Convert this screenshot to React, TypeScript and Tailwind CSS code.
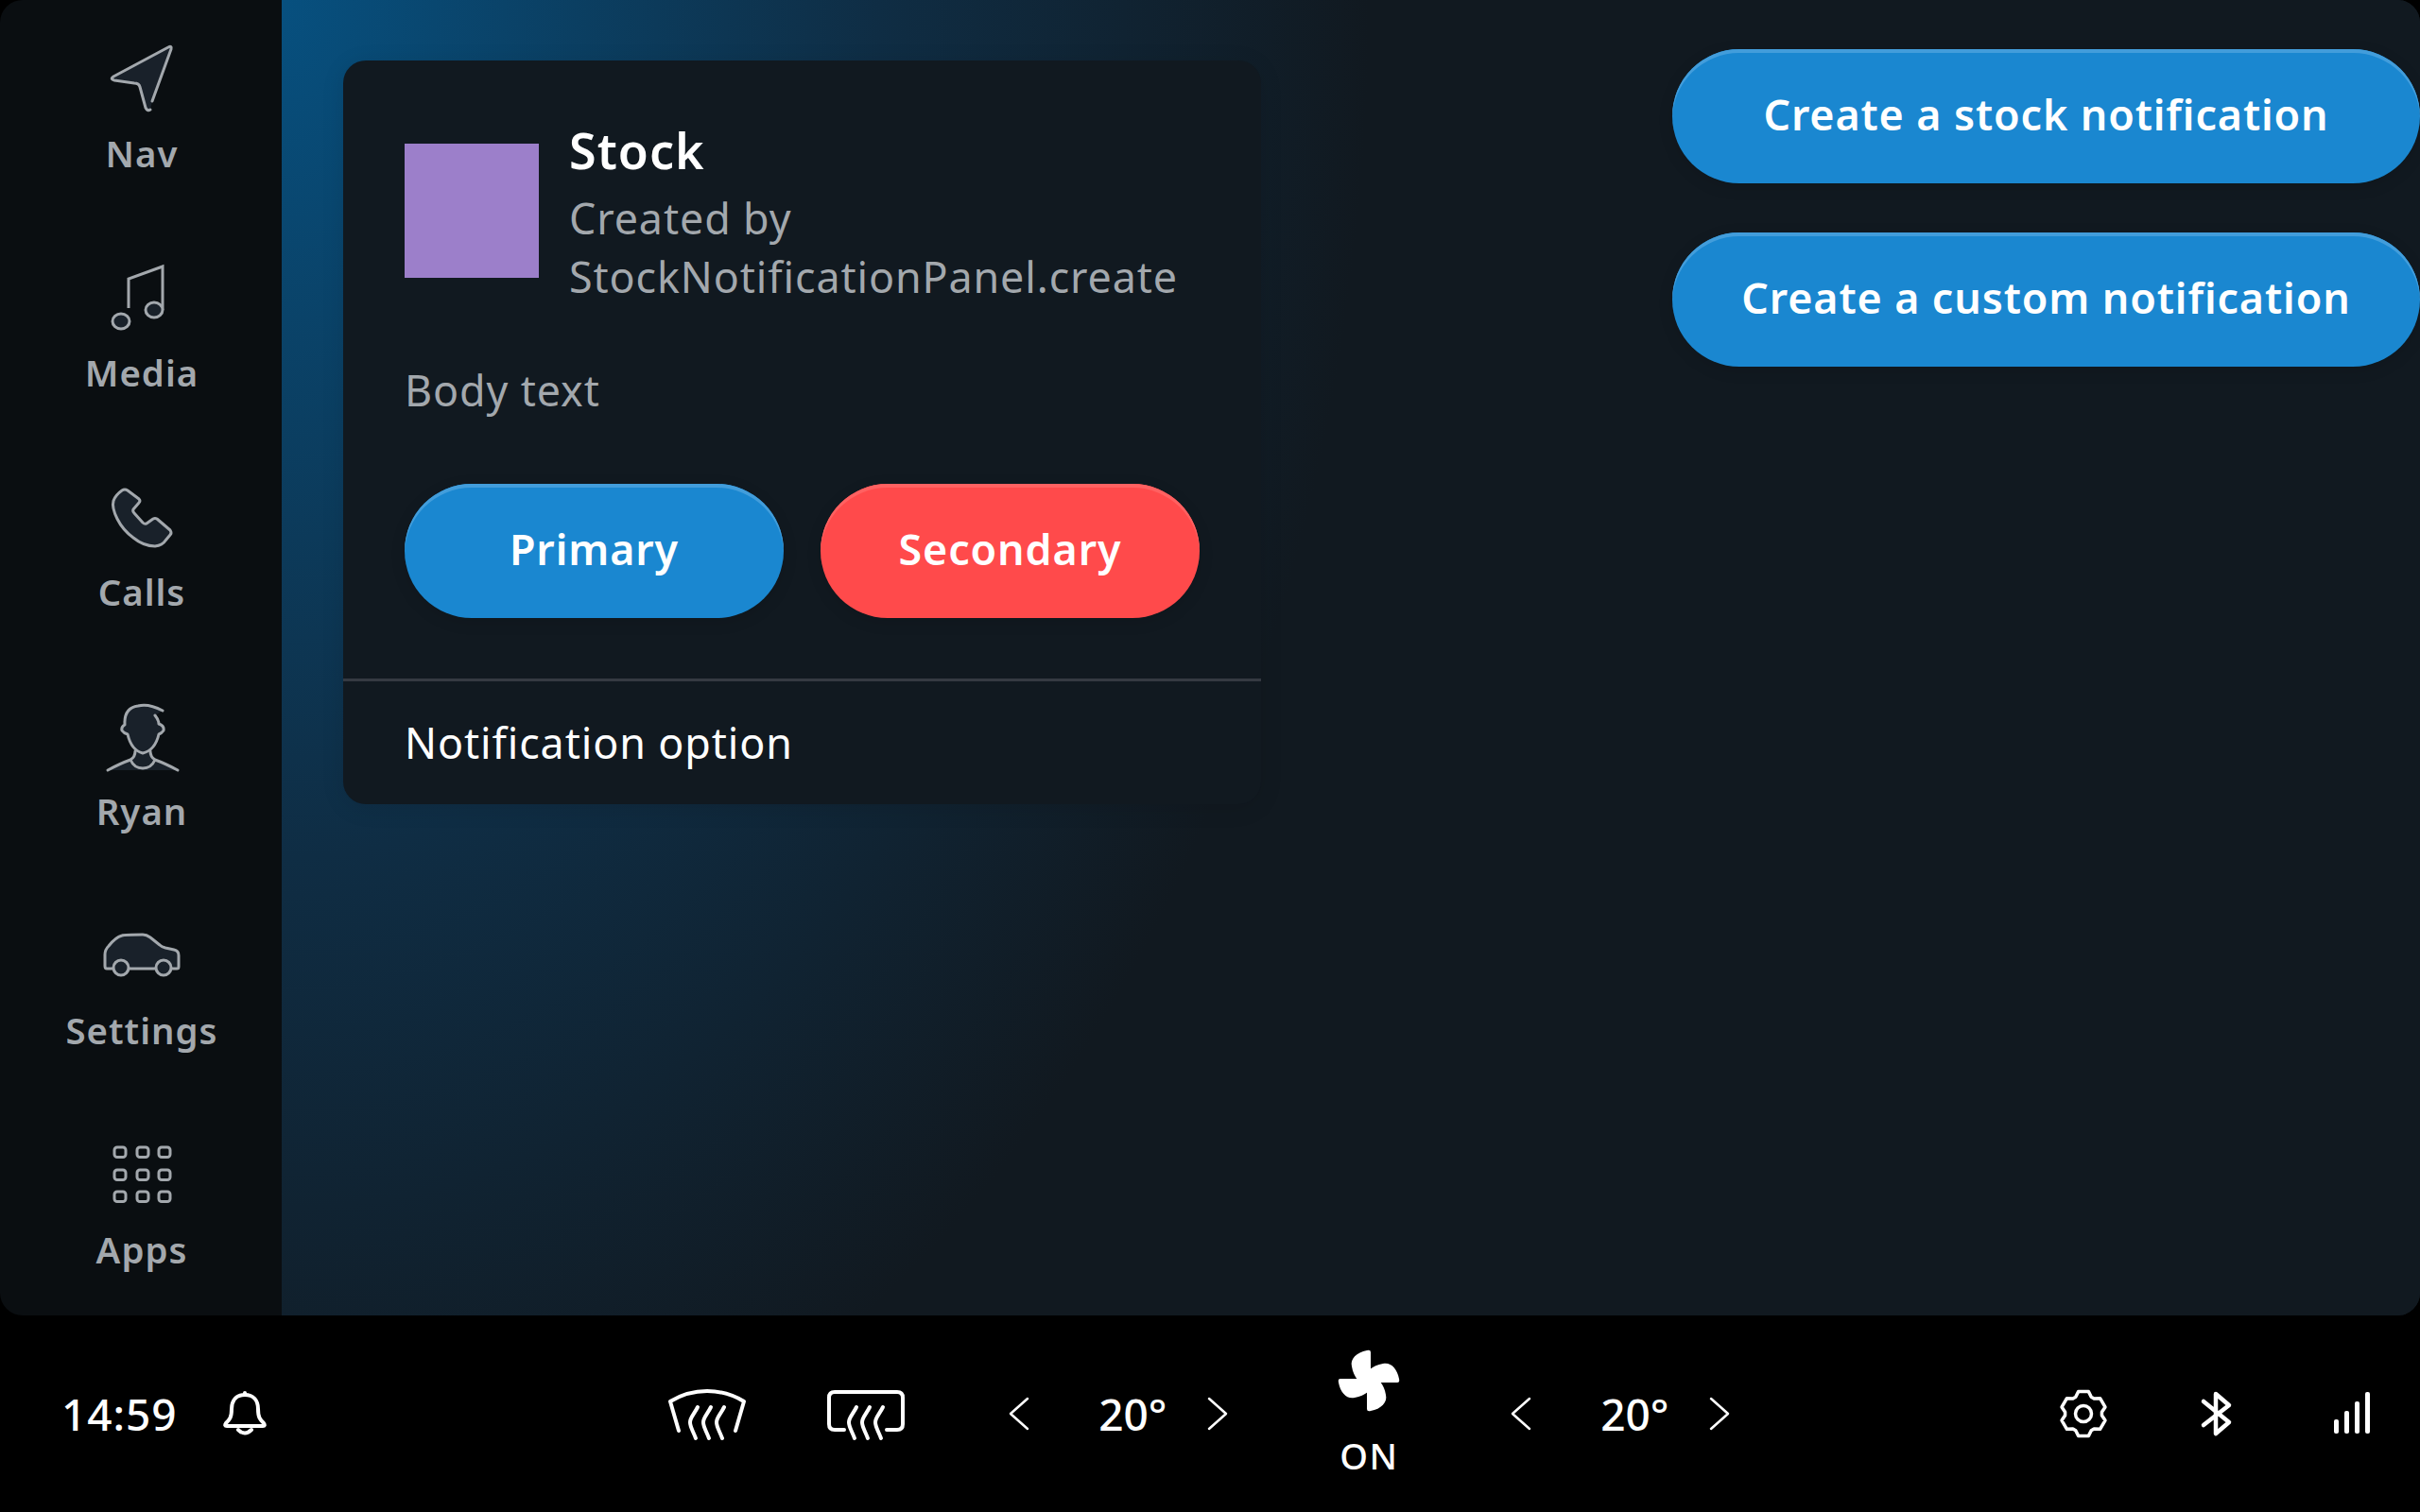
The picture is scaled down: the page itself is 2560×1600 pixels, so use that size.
const stroke = "#a3a8ad";
const fill = "#19212a";

function NavIcon() {
  return (
    <svg width="96" height="96" viewBox="0 0 96 96" fill="none" stroke={stroke} strokeWidth="3" strokeLinecap="round" strokeLinejoin="round">
      <path d="M57 81 Q54 83 52 79 L46 57 Q45 53 40 53 L19 50 Q14 49 18 46 L76 15 Q80 13 79 17 L59 72" fill={fill} />
    </svg>
  );
}
function MediaIcon() {
  return (
    <svg width="96" height="96" viewBox="0 0 96 96" fill="none" stroke={stroke} strokeWidth="3">
      <path d="M34 59 V28 L70 15 V61" />
      <ellipse cx="26" cy="73" rx="9" ry="8" fill={fill} />
      <ellipse cx="61" cy="61" rx="9" ry="8" fill={fill} />
    </svg>
  );
}
function CallsIcon() {
  return (
    <svg width="96" height="96" viewBox="0 0 96 96" fill={fill} stroke={stroke} strokeWidth="3" strokeLinejoin="round">
      <path d="M27 20 Q30 18 33 20 L45 29 Q47 31 45 33 L39 40 Q38 42 40 44 L49 54 Q51 56 53 55 L60 50 Q62 49 64 50 L78 62 Q80 65 78 67 L73 73 Q70 78 62 79 Q50 79 39 70 Q28 62 22 50 Q16 38 18 31 Q20 25 27 20Z" />
    </svg>
  );
}
function RyanIcon() {
  return (
    <svg width="96" height="96" viewBox="0 0 96 96" fill="none" stroke={stroke} strokeWidth="3" strokeLinecap="round" strokeLinejoin="round">
      <g transform="translate(0 3)">
        <path d="M12 81 Q25 74 36 70 Q41 68 41 61 L57 61 Q57 68 62 70 Q73 74 86 81 Z" fill={fill} stroke="none" />
        <path d="M62 23 Q66 28 66 32 Q72 34 71 39 Q69 42 66 43 Q62 60 49 63 Q37 60 33 43 Q29 42 27 39 Q26 35 30 33 Q29 15 44 13 Q55 10 70 18" fill={fill} />
        <path d="M12 81 Q25 74 36 70 Q41 67 41 61 M86 81 Q73 74 62 70 Q57 67 57 61 M36 70 Q40 79 49 79 Q58 79 62 70" />
      </g>
    </svg>
  );
}
function CarIcon() {
  return (
    <svg width="96" height="96" viewBox="0 0 96 96" fill="none" stroke={stroke} strokeWidth="3" strokeLinejoin="round">
      <path d="M17 62 H11 Q9 62 9 59 V47 Q9 42 13 38 Q20 29 27 27 Q30 26 49 26 Q53 26 57 29 L67 37 Q69 39 73 40 L82 42 Q87 43 87 48 V60 Q87 62 85 62 H80 M35 62 H62 " fill={fill} />
      <circle cx="26" cy="61" r="8" fill={fill} />
      <circle cx="71" cy="61" r="8" fill={fill} />
    </svg>
  );
}
function AppsIcon() {
  const p = [19, 43, 66];
  return (
    <svg width="96" height="96" viewBox="0 0 96 96" fill="none" stroke={stroke} strokeWidth="3">
      {p.map((y) => p.map((x) => <rect key={`${x}-${y}`} x={x} y={y} width="12" height="10.5" rx="3" />))}
    </svg>
  );
}

const nav = [
  { l: "Nav", I: NavIcon },
  { l: "Media", I: MediaIcon },
  { l: "Calls", I: CallsIcon },
  { l: "Ryan", I: RyanIcon },
  { l: "Settings", I: CarIcon },
  { l: "Apps", I: AppsIcon },
];

function Waves() {
  return (
    <>
      <path d="M38 41 C34 49 30 52 30 57 C30 62 33 66 36 74" />
      <path d="M52 41 C48 49 44 52 44 57 C44 62 47 66 50 74" />
      <path d="M66 41 C62 49 58 52 58 57 C58 62 61 66 64 74" />
    </>
  );
}
function Windshield() {
  return (
    <svg width="96" height="96" viewBox="0 0 96 96" fill="none" stroke="#fff" strokeWidth="4" strokeLinecap="round" strokeLinejoin="round">
      <path d="M18 66 L9 35 Q27 24 48 24 Q69 24 87 35 L78 66" />
      <Waves />
    </svg>
  );
}
function RearWindow() {
  return (
    <svg width="96" height="96" viewBox="0 0 96 96" fill="none" stroke="#fff" strokeWidth="4" strokeLinecap="round" strokeLinejoin="round">
      <path d="M25 65 H15 Q9 65 9 59 V31 Q9 25 15 25 H81 Q87 25 87 31 V59 Q87 65 81 65 H70" />
      <Waves />
    </svg>
  );
}
function Chevron({ right }: { right?: boolean }) {
  return (
    <svg width="24" height="36" viewBox="0 0 24 36" fill="none" stroke="#fff" strokeWidth="2.5" strokeLinecap="round" strokeLinejoin="round">
      <path d={right ? "M3 2 L21 18 L3 34" : "M21 2 L3 18 L21 34"} />
    </svg>
  );
}
function Temp() {
  return (
    <div className="flex items-center">
      <Chevron />
      <div className="w-[186px] pl-[30px] text-center text-[46px] leading-none font-medium text-white">20°</div>
      <Chevron right />
    </div>
  );
}
function Fan() {
  const blade = "M35 35 L35 3 Q35 0 31 1 C20 3 13 10 15 18 C16 24 18 28 21 32 L33 35Z";
  return (
    <svg width="66" height="66" viewBox="0 0 66 66" fill="#fff">
      {[0, 90, 180, 270].map((a) => (
        <path key={a} d={blade} transform={`rotate(${a} 33 33)`} />
      ))}
    </svg>
  );
}
function Gear() {
  const pts: string[] = [];
  const c = 28;
  for (let i = 0; i < 6; i++) {
    const t = -90 + i * 60;
    for (const [d, r] of [[-25, 19.5], [-13, 24], [13, 24], [25, 19.5]] as const) {
      const a = ((t + d) * Math.PI) / 180;
      pts.push(`${(c + r * Math.cos(a)).toFixed(2)},${(c + r * Math.sin(a)).toFixed(2)}`);
    }
  }
  return (
    <svg width="56" height="56" viewBox="0 0 56 56" fill="none" stroke="#fff" strokeWidth="3.5" strokeLinejoin="round">
      <polygon points={pts.join(" ")} />
      <circle cx="28" cy="28" r="8.5" />
    </svg>
  );
}
function Bluetooth() {
  return (
    <svg width="40" height="52" viewBox="0 0 40 52" fill="none" stroke="#fff" strokeWidth="4.5" strokeLinecap="round" strokeLinejoin="round">
      <path d="M7 13 L34 35 L20 47 V5 L34 17 L7 38" />
    </svg>
  );
}
function Signal() {
  return (
    <svg width="40" height="48" viewBox="0 0 40 48" fill="#fff">
      <rect x="1" y="30" width="5" height="15" rx="2" />
      <rect x="12" y="21" width="5" height="24" rx="2" />
      <rect x="23" y="11" width="5" height="34" rx="2" />
      <rect x="34" y="1" width="5" height="44" rx="2" />
    </svg>
  );
}
function Bell() {
  return (
    <svg width="48" height="52" viewBox="0 0 48 52" fill="none" stroke="#fff" strokeWidth="4" strokeLinecap="round" strokeLinejoin="round">
      <path d="M24 6 C15 6 10 12 10 21 C10 30 8 32 4 36 Q2 39 5 39 H43 Q46 39 44 36 C40 32 38 30 38 21 C38 12 33 6 24 6Z" />
      <path d="M24 5 V4" />
      <path d="M17 43 Q24 50 31 43" />
    </svg>
  );
}

function Btn({ children, red, w }: { children: string; red?: boolean; w: string }) {
  return (
    <button
      className={`${w} h-[142px] rounded-full pb-[5px] text-[44.8px] font-semibold tracking-[0.02em] text-white ${
        red
          ? "bg-[#ff4a4b] shadow-[inset_0_4px_0_#ff6161,0_4px_16px_rgba(0,0,0,0.12)]"
          : "bg-[#1a87d0] shadow-[inset_0_4px_0_#429ddb,0_4px_16px_rgba(0,0,0,0.12)]"
      }`}
    >
      {children}
    </button>
  );
}

export default function App() {
  return (
    <div className="flex h-[1600px] w-[2560px] flex-col overflow-hidden bg-black font-['Noto_Sans',sans-serif]">
      <div className="flex h-[1392px] overflow-hidden rounded-[24px]">
        <aside className="flex w-[298px] shrink-0 flex-col bg-[#0a0e11]">
          {nav.map(({ l, I }) => (
            <div key={l} className="flex h-[232px] flex-col items-center justify-center pb-1 pl-[2px]">
              <I />
              <div className="pt-[1px] text-[38.4px] leading-[61px] font-semibold tracking-[1px] text-[#a3a8ad]">{l}</div>
            </div>
          ))}
        </aside>
        <main className="flex flex-1 justify-between bg-[#111920] bg-[radial-gradient(ellipse_1150px_1650px_at_0_0,#07507f_0%,#0f2d44_55%,#111920_100%)]">
          <section className="mt-[64px] ml-[65px] flex h-[787px] w-[971px] flex-col rounded-[24px] bg-[#111920] shadow-[0_4px_24px_rgba(0,0,0,0.1)]">
            <div className="flex gap-8 px-[65px] pt-[66px]">
              <div className="mt-[22px] h-[142px] w-[142px] shrink-0 bg-[#9c7fca]" />
              <div>
                <div className="text-[52px] leading-[58px] font-semibold tracking-[0.02em] text-white">Stock</div>
                <div className="mt-[12px] text-[44.8px] leading-[62px] tracking-[0.02em] text-[#a3a8ad]">
                  Created by
                  <br />
                  StockNotificationPanel.create
                </div>
              </div>
            </div>
            <div className="mt-[58px] px-[65px] text-[44.8px] leading-[61px] tracking-[0.02em] text-[#a3a8ad]">Body text</div>
            <div className="mt-[69px] flex gap-[39px] px-[65px]">
              <Btn w="w-[401px]">Primary</Btn>
              <Btn w="w-[401px]" red>
                Secondary
              </Btn>
            </div>
            <div className="mt-[64px] flex h-[133px] items-center border-t-[3px] border-[#353a42] px-[65px] text-[44.8px] tracking-[0.02em] text-white">
              Notification option
            </div>
          </section>
          <div className="mt-[52px] flex flex-col gap-[52px]">
            <Btn w="w-[791px]">Create a stock notification</Btn>
            <Btn w="w-[791px]">Create a custom notification</Btn>
          </div>
        </main>
      </div>
      <footer className="flex h-[208px] items-center pl-[65px] text-white">
        <div className="text-[46px] leading-none font-medium tracking-[0.02em]">14:59</div>
        <div className="ml-[48px]">
          <Bell />
        </div>
        <div className="ml-[417px]">
          <Windshield />
        </div>
        <div className="ml-[72px]">
          <RearWindow />
        </div>
        <div className="ml-[102px]">
          <Temp />
        </div>
        <div className="ml-[115px] flex flex-col items-center pb-[5px]">
          <Fan />
          <div className="mt-[27px] text-[38px] leading-none font-medium tracking-[0.04em]">ON</div>
        </div>
        <div className="ml-[116px]">
          <Temp />
        </div>
        <div className="ml-[345px]">
          <Gear />
        </div>
        <div className="ml-[92px]">
          <Bluetooth />
        </div>
        <div className="ml-[104px]">
          <Signal />
        </div>
      </footer>
    </div>
  );
}
